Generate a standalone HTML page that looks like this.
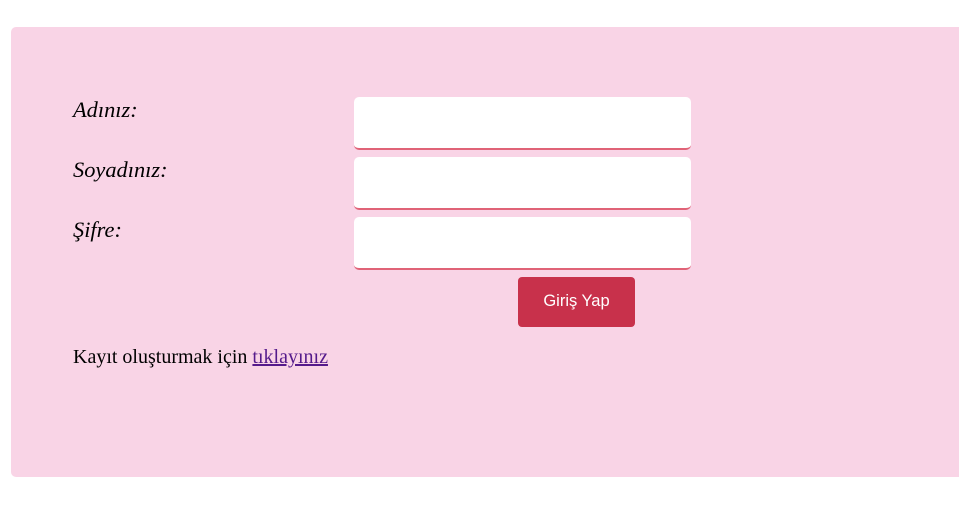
<!DOCTYPE html>
<html><head><style>
body{margin:0;background:#fff;width:959px;height:523px;overflow:hidden;position:relative;font-family:"Liberation Serif",serif}
.panel{position:absolute;left:11px;top:27px;width:960px;height:450px;background:#f9d4e6;border-radius:5px}
.lbl{position:absolute;left:73px;font-style:italic;font-size:22.4px;color:#000}
.inp{position:absolute;left:354px;width:337px;height:51px;background:#fff;border-radius:5px;border-bottom:2px solid #e06377;box-sizing:content-box}
.btn{position:absolute;left:518px;top:277px;width:117px;height:50px;background:#c8314b;border-radius:4px;color:#fff;font-family:"Liberation Sans",sans-serif;font-size:16.5px;text-align:center;line-height:49px}
.txt{position:absolute;left:73px;top:346px;font-size:20px;color:#000}
a{color:#551a8b;text-decoration:underline}
</style></head><body>
<div class="panel"></div>
<div class="lbl" style="top:97px">Adınız:</div>
<div class="lbl" style="top:157px">Soyadınız:</div>
<div class="lbl" style="top:217px">Şifre:</div>
<div class="inp" style="top:97px"></div>
<div class="inp" style="top:157px"></div>
<div class="inp" style="top:217px"></div>
<div class="btn">Giriş Yap</div>
<div class="txt">Kayıt oluşturmak için <a>tıklayınız</a></div>
</body></html>
